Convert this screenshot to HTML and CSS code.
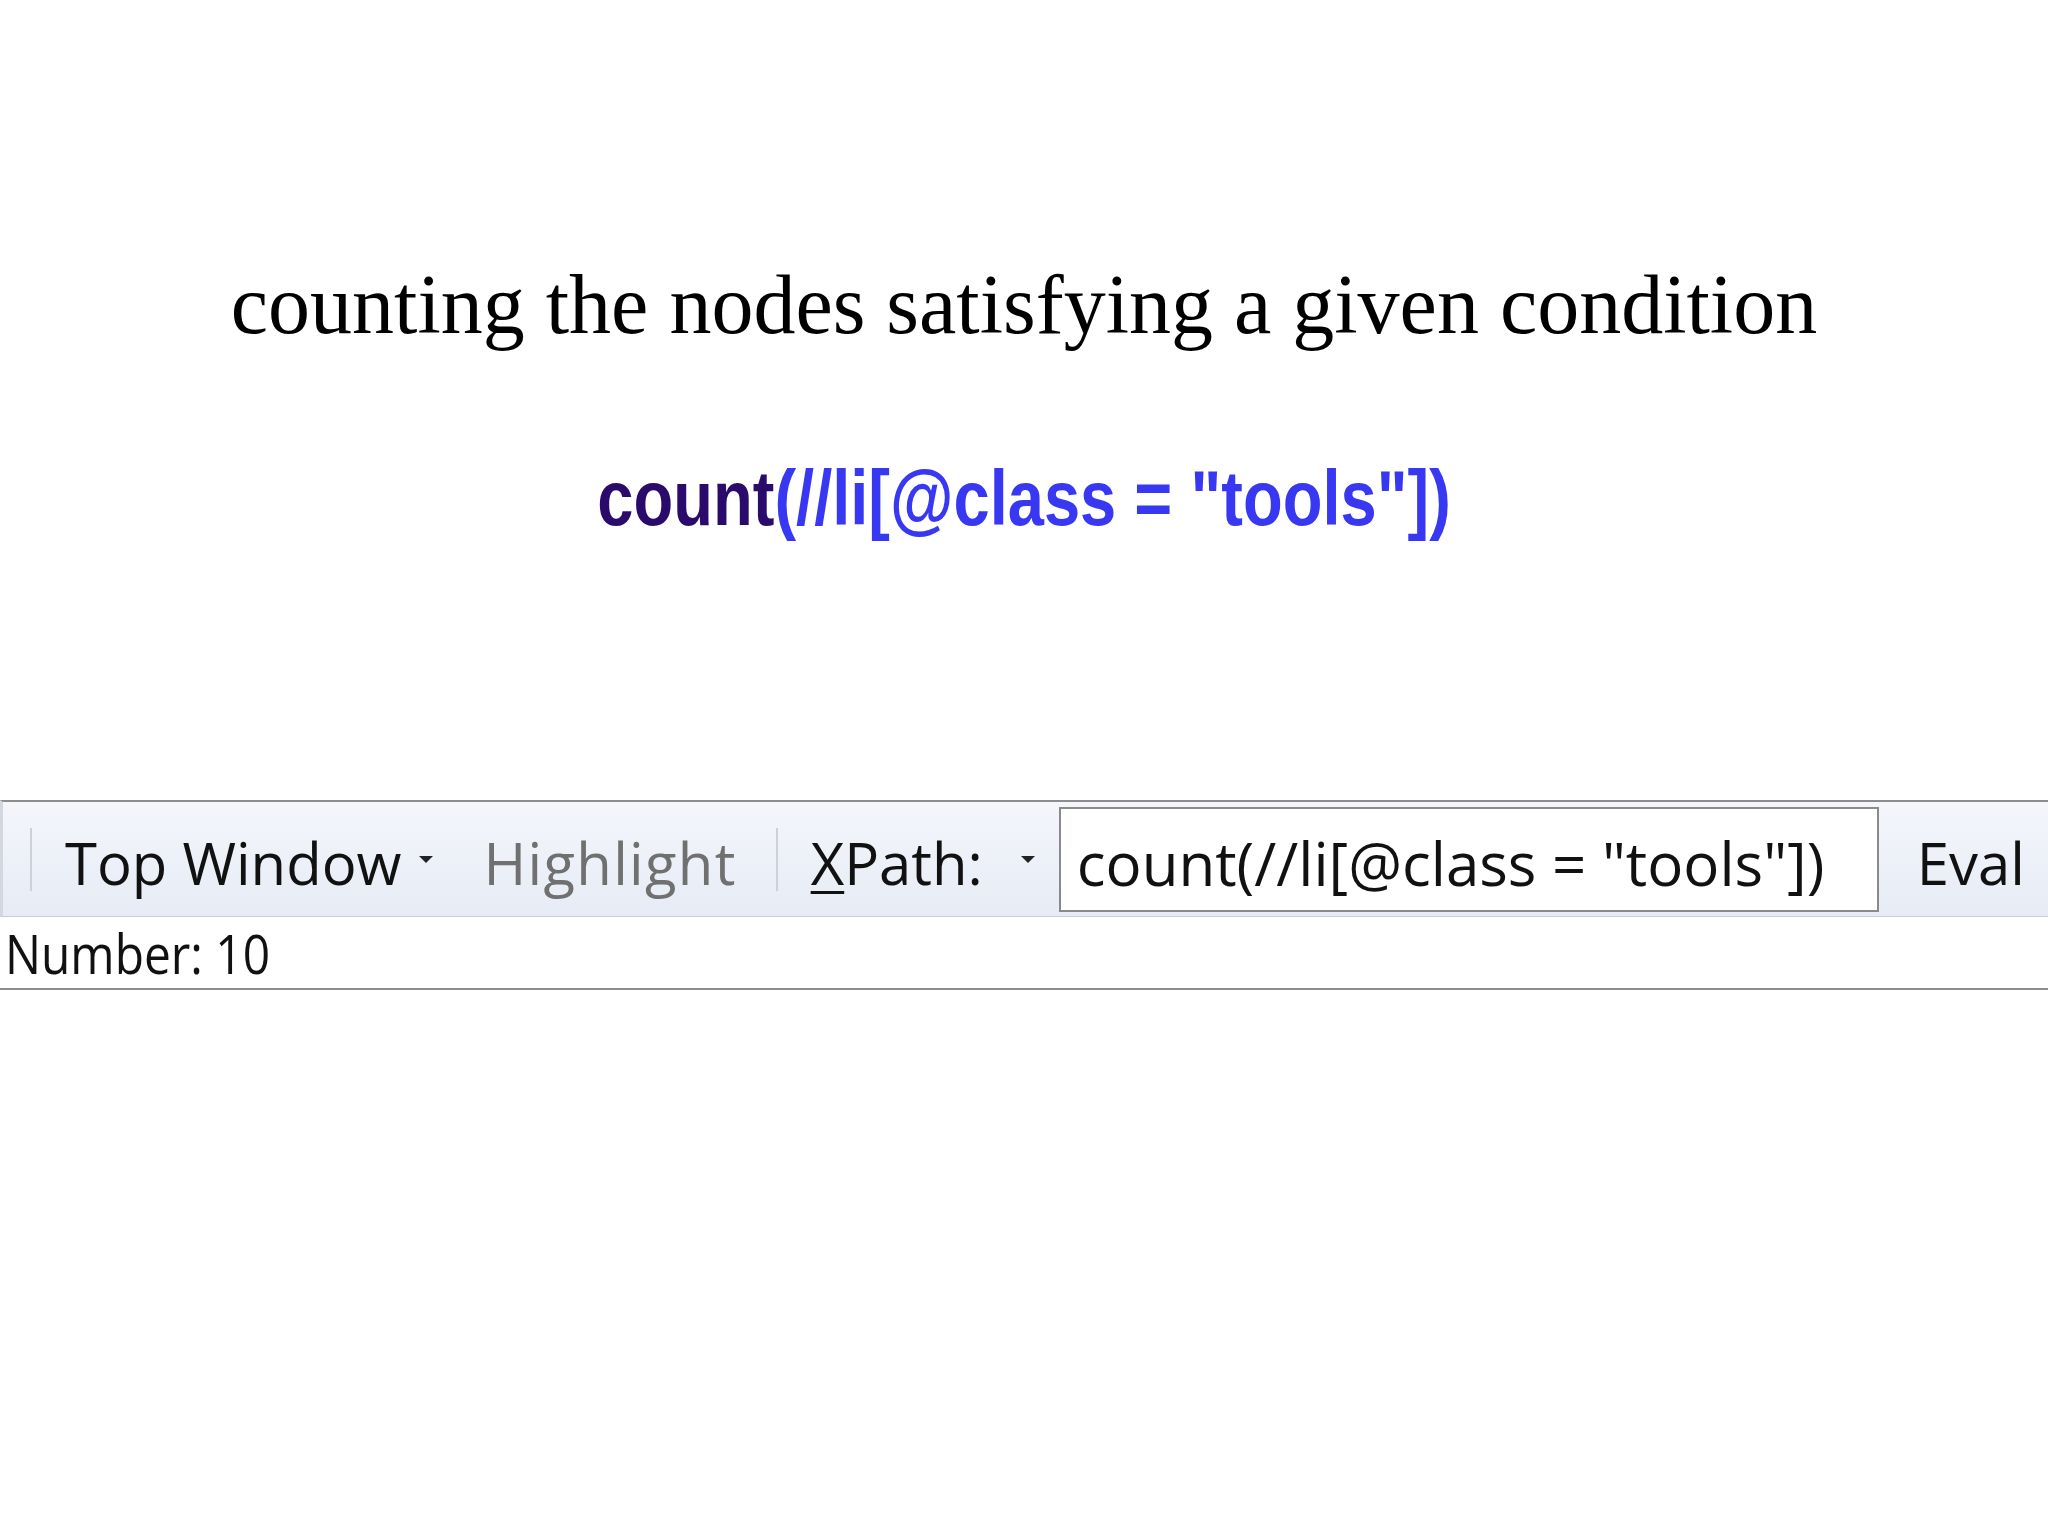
FILE: index.html
```html
<!DOCTYPE html>
<html lang="en">
<head>
    <meta charset="UTF-8">
    <title>XPath count</title>
    <link rel="stylesheet" href="styles.css">
</head>
<body>

    <!-- Slide text -->
    <section class="slide">
        <h1 class="slide-title">counting the nodes satisfying a given condition</h1>
        <div class="code-line"><span class="code-inner"><span class="fn">count</span><span class="arg">(//li[@class = "tools"])</span></span></div>
    </section>

    <!-- Toolbar screenshot -->
    <section class="panel">
        <div class="toolbar">
            <span class="sep"></span>
            <span class="tb-item">Top Window</span>
            <span class="drop"></span>
            <span class="tb-item disabled">Highlight</span>
            <span class="sep sep-mid"></span>
            <span class="tb-item"><u>X</u>Path:</span>
            <span class="drop drop-xpath"></span>
            <div class="xpath-input">count(//li[@class = "tools"])</div>
            <span class="tb-item eval">Eval</span>
        </div>
        <div class="result">
            <span class="result-text">Number: 10</span>
        </div>
    </section>

</body>
</html>
```

FILE: styles.css
```css
/* General */
body {
    margin: 0;
    padding: 0;
    background: #ffffff;
    color: #000;
}

/* Slide */
.slide {
    padding-top: 263px;
    text-align: center;
}

.slide-title {
    margin: 0;
    font-family: "Liberation Serif", serif;
    font-weight: normal;
    font-size: 84px;
    line-height: 84px;
}

.code-line {
    margin-top: 113px;
    height: 77px;
    font-family: "Liberation Sans", Arial, sans-serif;
    font-weight: bold;
    font-size: 77px;
    line-height: 77px;
}

.code-inner {
    display: inline-block;
    transform: scaleX(0.845);
}

.fn {
    color: #2a0b6c;
}

.arg {
    color: #3838f2;
}

/* Panel */
.panel {
    margin-top: 263px;
    font-family: "Open Sans", sans-serif;
}

.toolbar {
    display: flex;
    align-items: center;
    height: 114px;
    border-top: 2px solid #8c8c8c;
    border-bottom: 1px solid #c6cdd9;
    border-left: 3px solid #d3d8e0;
    padding-left: 27px;
    background: linear-gradient(#f4f6fb, #e6ebf5);
    font-size: 58px;
    color: #111;
}

.sep {
    width: 2px;
    height: 63px;
    background: #cdd1d8;
}

.sep-mid {
    margin-left: 39px;
}

.tb-item {
    margin-left: 33px;
    line-height: 1;
    padding-top: 8px;
}

.tb-item u {
    text-decoration-thickness: 3px;
    text-underline-offset: 6px;
}

.disabled {
    margin-left: 50px;
    letter-spacing: 1.3px;
    color: #707070;
}

.drop {
    width: 0;
    height: 0;
    margin-left: 18px;
    border-left: 7px solid transparent;
    border-right: 7px solid transparent;
    border-top: 7px solid #222;
}

.drop-xpath {
    margin-left: 38px;
}

.xpath-input {
    box-sizing: border-box;
    width: 820px;
    height: 105px;
    margin-left: 24px;
    padding: 8px 16px 0;
    border: 2px solid #8a8a8a;
    background: #fff;
    display: flex;
    align-items: center;
    white-space: nowrap;
    font-size: 60px;
}

.eval {
    margin-left: 38px;
}

/* Result row */
.result {
    height: 71px;
    border-bottom: 2px solid #8c8c8c;
    display: flex;
    align-items: center;
}

.result-text {
    display: inline-block;
    margin-left: 5px;
    font-size: 55px;
    line-height: 1;
    transform: scaleX(0.87);
    transform-origin: left center;
    color: #111;
}
```
